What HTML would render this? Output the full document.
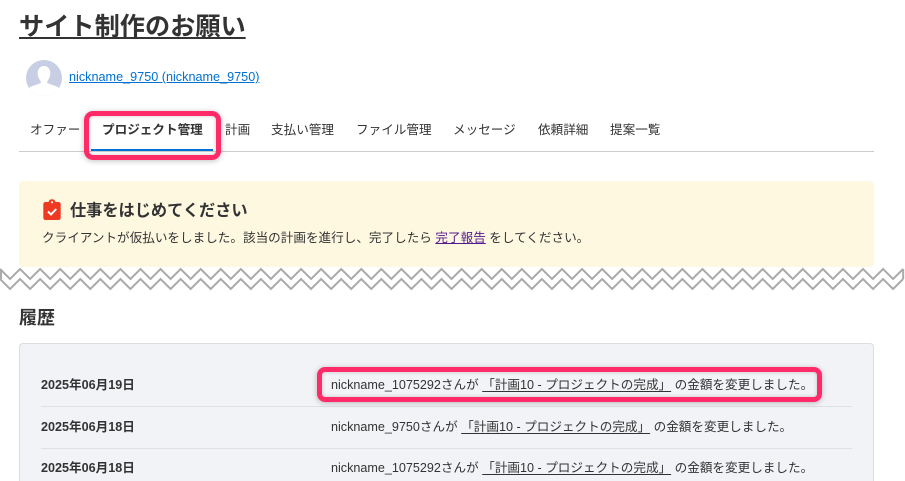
<!DOCTYPE html>
<html lang="ja"><head><meta charset="utf-8"><style>
html,body{margin:0;padding:0;background:#fff;width:905px;height:481px;overflow:hidden}
#w{position:relative;width:905px;height:481px;overflow:hidden;font-family:"Liberation Sans","Noto Sans CJK JP",sans-serif;color:#333}
.a{position:absolute;white-space:nowrap}
.tab{top:121px;font-size:12.6px;line-height:18px;color:#333}
.date{left:41px;font-size:12.6px;font-weight:bold;line-height:18px}
.msg{left:331px;font-size:12.6px;line-height:18px}
.msg u{text-underline-offset:2px}
.box{position:absolute;border:5px solid #ff2a68;box-shadow:0 1px 6px rgba(0,0,0,.25),inset 0 0 4px rgba(0,0,0,.2);box-sizing:border-box}
</style></head><body><div id="w">
<h1 class="a" style="left:19px;top:10px;margin:0;font-size:25.2px;line-height:34px;font-weight:bold;text-decoration:underline;color:#333">サイト制作のお願い</h1>
<svg class="a" style="left:26px;top:60px" width="36" height="36" viewBox="0 0 36 36"><defs><clipPath id="c"><circle cx="18" cy="18" r="18"/></clipPath></defs><g clip-path="url(#c)"><rect width="36" height="36" fill="#c8cfe4"/><path d="M18 6c3.800 0 6.300 3 6.300 7 0 3.500-1.500 6.500-3 8v2c3 1.500 8.700 2.500 11.700 5v8H3v-8c3-2.500 8.700-3.500 11.700-5v-2c-1.500-1.500-3-4.500-3-8 0-4 2.500-7 6.300-7z" fill="#fff"/></g></svg>
<a class="a" style="left:69px;top:68px;font-size:12.65px;line-height:18px;color:#0070d2;text-decoration:underline">nickname_9750 (nickname_9750)</a>
<div class="a tab" style="left:30px">オファー</div>
<div class="a tab" style="left:102px;font-weight:bold">プロジェクト管理</div>
<div class="a tab" style="left:225px">計画</div>
<div class="a tab" style="left:271px">支払い管理</div>
<div class="a tab" style="left:356px">ファイル管理</div>
<div class="a tab" style="left:453px">メッセージ</div>
<div class="a tab" style="left:538px">依頼詳細</div>
<div class="a tab" style="left:610px">提案一覧</div>
<div class="a" style="left:19px;top:151px;width:855px;height:1px;background:#ccc"></div>
<div class="a" style="left:91px;top:149px;width:122px;height:2px;background:#0070d2"></div>
<div class="box" style="left:84px;top:111px;width:137px;height:49px;border-radius:9px"></div>
<div class="a" style="left:19px;top:181px;width:855px;height:86px;background:#fef8e1;border-radius:4px"></div>
<svg class="a" style="left:43px;top:199px" width="18" height="21" viewBox="0 0 18 21"><path d="M2.500 3H5.500C6 1.200 7.200.3 9 .3S12 1.200 12.500 3H15.500A2.200 2.200 0 0 1 17.700 5.200V18.800A2.200 2.200 0 0 1 15.500 21H2.500A2.200 2.200 0 0 1 .3 18.800V5.200A2.200 2.200 0 0 1 2.500 3z" fill="#ee3a22"/><circle cx="9" cy="3.200" r="1.100" fill="#fef8e1"/><path d="M5 12.500l3 3 5.200-5.500" fill="none" stroke="#fff" stroke-width="2"/></svg>
<div class="a" style="left:70px;top:200px;font-size:16.2px;line-height:22px;font-weight:bold">仕事をはじめてください</div>
<div class="a" style="left:42px;top:229px;font-size:12.6px;line-height:18px">クライアントが仮払いをしました。該当の計画を進行し、完了したら <u style="color:#551a8b">完了報告</u> をしてください。</div>
<svg class="a" style="left:0;top:265px" width="905" height="28" viewBox="0 0 905 28"><g transform="scale(1.0035 1)" fill="none" stroke="#aaa" stroke-width="2"><path d="M1 4V14M900 4V14"/><path d="M0 4l10 10L20 4l10 10L40 4l10 10L60 4l10 10L80 4l10 10L100 4l10 10L120 4l10 10L140 4l10 10L160 4l10 10L180 4l10 10L200 4l10 10L220 4l10 10L240 4l10 10L260 4l10 10L280 4l10 10L300 4l10 10L320 4l10 10L340 4l10 10L360 4l10 10L380 4l10 10L400 4l10 10L420 4l10 10L440 4l10 10L460 4l10 10L480 4l10 10L500 4l10 10L520 4l10 10L540 4l10 10L560 4l10 10L580 4l10 10L600 4l10 10L620 4l10 10L640 4l10 10L660 4l10 10L680 4l10 10L700 4l10 10L720 4l10 10L740 4l10 10L760 4l10 10L780 4l10 10L800 4l10 10L820 4l10 10L840 4l10 10L860 4l10 10L880 4l10 10L900 4"/><path d="M0 14l10 10L20 14l10 10L40 14l10 10L60 14l10 10L80 14l10 10L100 14l10 10L120 14l10 10L140 14l10 10L160 14l10 10L180 14l10 10L200 14l10 10L220 14l10 10L240 14l10 10L260 14l10 10L280 14l10 10L300 14l10 10L320 14l10 10L340 14l10 10L360 14l10 10L380 14l10 10L400 14l10 10L420 14l10 10L440 14l10 10L460 14l10 10L480 14l10 10L500 14l10 10L520 14l10 10L540 14l10 10L560 14l10 10L580 14l10 10L600 14l10 10L620 14l10 10L640 14l10 10L660 14l10 10L680 14l10 10L700 14l10 10L720 14l10 10L740 14l10 10L760 14l10 10L780 14l10 10L800 14l10 10L820 14l10 10L840 14l10 10L860 14l10 10L880 14l10 10L900 14"/></g></svg>
<div class="a" style="left:19px;top:306px;font-size:18px;line-height:24px;font-weight:bold">履歴</div>
<div class="a" style="left:19px;top:343px;width:855px;height:150px;box-sizing:border-box;background:#f2f3f7;border:1px solid #ddd;border-radius:4px"></div>
<div class="a" style="left:41px;top:406px;width:811px;height:1px;background:#dfe0e5"></div>
<div class="a" style="left:41px;top:448px;width:811px;height:1px;background:#dfe0e5"></div>
<div class="a date" style="top:376px">2025年06月19日</div>
<div class="a msg" style="top:376px">nickname_1075292さんが <u>「計画10 - プロジェクトの完成」</u> の金額を変更しました。</div>
<div class="a date" style="top:418px">2025年06月18日</div>
<div class="a msg" style="top:418px">nickname_9750さんが <u>「計画10 - プロジェクトの完成」</u> の金額を変更しました。</div>
<div class="a date" style="top:459px">2025年06月18日</div>
<div class="a msg" style="top:459px">nickname_1075292さんが <u>「計画10 - プロジェクトの完成」</u> の金額を変更しました。</div>
<div class="box" style="left:317px;top:367px;width:505px;height:35px;border-radius:8px"></div>
</div></body></html>
